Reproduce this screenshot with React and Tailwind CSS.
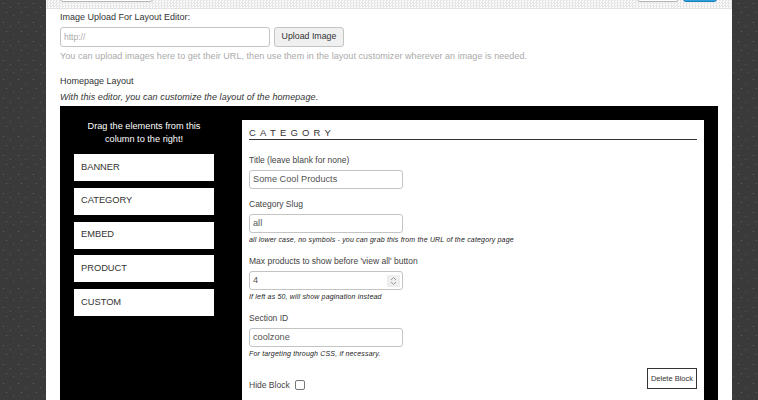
const dots = "bg-[#3a3a3a] bg-[radial-gradient(circle_at_3.5px_3.5px,#666_0.3px,transparent_0.6px),radial-gradient(circle_at_10.5px_7.5px,#5c5c5c_0.3px,transparent_0.6px),radial-gradient(circle_at_6.5px_12.5px,#606060_0.3px,transparent_0.6px),radial-gradient(circle_at_13.5px_15.5px,#5a5068_0.3px,transparent_0.6px)] bg-[length:15px_19px]";
const inputCls = "h-[19px] rounded-[3px] border border-[#c4c4c4] bg-white pl-[3px] text-[9.2px] text-[#555] flex items-center";

function Field({ label, value, hint, gapTop, spinner }) {
  return (
    <div className={gapTop}>
      <div className="text-[8.5px] leading-[12px] text-[#444]">{label}</div>
      <div className={`mt-[4px] w-[154px] ${inputCls} justify-between pr-[1px]`}>
        <span>{value}</span>
        {spinner && (
          <span className="mr-[1px] flex h-[12px] w-[13px] flex-col items-center justify-center bg-[#eee]">
            <svg width="7" height="10" viewBox="0 0 7 10" fill="none" stroke="#888" strokeWidth="0.8">
              <path d="M1 4l2.5-2.5L6 4M1 6l2.5 2.5L6 6" />
            </svg>
          </span>
        )}
      </div>
      {hint && <div className="mt-[2px] text-[7px] leading-[10px] italic tracking-[0.18px] text-[#222]">{hint}</div>}
    </div>
  );
}

function Item({ children }) {
  return <div className="flex h-[27px] w-[140px] items-center bg-white pl-[7px] text-[9.3px] text-[#333]">{children}</div>;
}

export default function App() {
  return (
    <div className={`flex h-[400px] w-[758px] overflow-hidden font-['Liberation_Sans',sans-serif] ${dots}`}>
      <div className="w-[46px] shrink-0" />
      <div className="flex w-[686px] shrink-0 flex-col bg-white">
        <div className="flex h-[9px] shrink-0 items-start justify-between overflow-hidden border-b border-[#e2e2e2] bg-[repeating-conic-gradient(#e6e6e6_0_25%,#fbfbfb_0_50%)] bg-[length:3px_3px] pl-[14px] pr-[15px]">
          <div className="-mt-[10px] h-[12px] w-[93px] rounded-[3px] border border-[#b5b5b5] bg-white" />
          <div className="-mt-[10px] flex gap-[4px]">
            <div className="h-[12px] w-[42px] rounded-[3px] border border-[#b5b5b5] bg-white" />
            <div className="h-[12px] w-[34px] rounded-[3px] border border-[#1b7fb8] bg-[#2ba1dd]" />
          </div>
        </div>
        <div className="flex flex-1 flex-col px-[14px] pt-[2px]">
          <div className="text-[9px] leading-[12px] text-[#333]">Image Upload For Layout Editor:</div>
          <div className="mt-[4px] flex gap-[4px]">
            <div className="flex h-[20px] w-[210px] items-center rounded-[3px] border border-[#c4c4c4] px-[3px] text-[8.5px] text-[#aaa]">http://</div>
            <div className="flex h-[20px] w-[70px] items-center justify-center rounded-[3px] border border-[#c4c4c4] bg-[#f0f0f0] text-[8.8px] text-[#333]">Upload Image</div>
          </div>
          <div className="mt-[3px] text-[9px] leading-[12px] tracking-[0.05px] text-[#aaa]">You can upload images here to get their URL, then use them in the layout customizer wherever an image is needed.</div>
          <div className="mt-[13px] text-[9px] leading-[12px] text-[#333]">Homepage Layout</div>
          <div className="mt-[4px] text-[9px] leading-[12px] italic tracking-[0.09px] text-[#333]">With this editor, you can customize the layout of the homepage.</div>
          <div className="mt-[3px] flex flex-1 bg-black px-[14px] pt-[14px]">
            <div className="w-[168px] shrink-0">
              <div className="w-[140px] text-center text-[9.2px] leading-[13px] text-white">Drag the elements from this<br />column to the right!</div>
              <div className="mt-[8px] flex flex-col gap-[6.75px]">
                <Item>BANNER</Item>
                <Item>CATEGORY</Item>
                <Item>EMBED</Item>
                <Item>PRODUCT</Item>
                <Item>CUSTOM</Item>
              </div>
            </div>
            <div className="relative flex-1 bg-white px-[7px] pt-[6px]">
              <div className="border-b border-[#333] text-[9.5px] leading-[13px] tracking-[4.2px] text-[#333]">CATEGORY</div>
              <Field gapTop="mt-[14px]" label="Title (leave blank for none)" value="Some Cool Products" />
              <Field gapTop="mt-[9px]" label="Category Slug" value="all" hint="all lower case, no symbols - you can grab this from the URL of the category page" />
              <Field gapTop="mt-[10px]" label="Max products to show before 'view all' button" value="4" spinner hint="If left as 50, will show pagination instead" />
              <Field gapTop="mt-[10px]" label="Section ID" value="coolzone" hint="For targeting through CSS, if necessary." />
              <div className="mt-[20px] flex items-center gap-[5px] text-[8.5px] leading-[12px] text-[#444]">
                Hide Block
                <span className="h-[10px] w-[10px] rounded-[2px] border border-[#777] bg-white" />
              </div>
              <div className="absolute right-[7px] top-[248px] flex h-[21px] w-[50px] items-center justify-center border border-[#333] bg-white text-[7.5px] text-[#333]">Delete Block</div>
            </div>
          </div>
        </div>
      </div>
      <div className="flex-1" />
    </div>
  );
}
